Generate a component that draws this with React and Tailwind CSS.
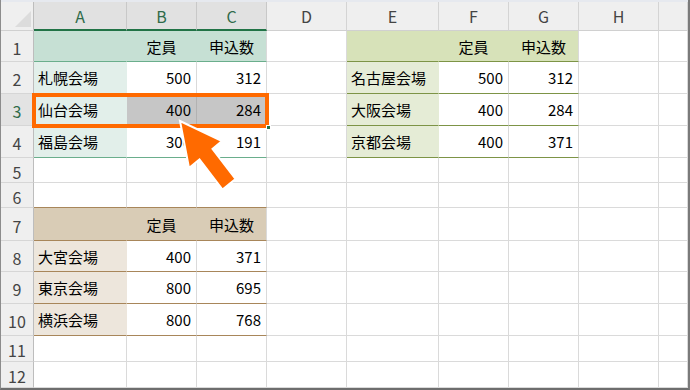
import React from "react";

const FONT = { fontFamily: '"Noto Sans CJK JP", "Noto Sans", sans-serif' };

const cols = ["A", "B", "C", "D", "E", "F", "G", "H", ""];
const rowH = [31, 32, 32, 32, 25, 25, 33, 31, 32, 32, 26, 26];

const T1H = "bg-[#c6e0d4]";
const T1A = "bg-[#e2efea]";
const T2H = "bg-[#d9ccb6]";
const T2A = "bg-[#ede6dc]";
const T3H = "bg-[#d7e2b9]";
const T3A = "bg-[#e5ecd6]";

function cellInfo(r, c) {
  let bg = "bg-white";
  let br = "border-r-[#dadada]";
  let bb = "border-b-[#dadada]";
  let text = "";
  let align = "left";

  const data = {
    "1,1": "定員", "1,2": "申込数",
    "2,0": "札幌会場", "2,1": "500", "2,2": "312",
    "3,0": "仙台会場", "3,1": "400", "3,2": "284",
    "4,0": "福島会場", "4,1": "300", "4,2": "191",
    "7,1": "定員", "7,2": "申込数",
    "8,0": "大宮会場", "8,1": "400", "8,2": "371",
    "9,0": "東京会場", "9,1": "800", "9,2": "695",
    "10,0": "横浜会場", "10,1": "800", "10,2": "768",
    "1,5": "定員", "1,6": "申込数",
    "2,4": "名古屋会場", "2,5": "500", "2,6": "312",
    "3,4": "大阪会場", "3,5": "400", "3,6": "284",
    "4,4": "京都会場", "4,5": "400", "4,6": "371",
  };
  text = data[`${r},${c}`] || "";
  if (/^\d+$/.test(text)) align = "right";
  if (text === "定員" || text === "申込数") align = "center";

  if (c <= 2 && r >= 1 && r <= 4) {
    if (r === 1) {
      bg = T1H;
      bb = "border-b-[#6aae8c]";
      if (c < 2) br = "border-r-[#c6e0d4]";
    } else {
      if (c === 0) {
        bg = T1A;
        br = "border-r-[#e2efea]";
        bb = r === 4 ? "border-b-[#6aae8c]" : "border-b-[#e2efea]";
      } else {
        bb = r === 4 ? "border-b-[#6aae8c]" : "border-b-[#dadada]";
      }
      if (r === 3 && c >= 1) {
        bg = "bg-[#c6c6c6]";
        br = c === 1 ? "border-r-[#b2b2b2]" : "border-r-[#dadada]";
        bb = "border-b-[#c6c6c6]";
      }
    }
  }
  if (c <= 2 && r === 6) bb = "border-b-[#a8865a]";
  if (c <= 2 && r >= 7 && r <= 10) {
    bb = "border-b-[#a8865a]";
    if (r === 7) {
      bg = T2H;
      if (c < 2) br = "border-r-[#d9ccb6]";
    } else if (c === 0) {
      bg = T2A;
      br = "border-r-[#ede6dc]";
    }
  }
  if (c >= 4 && c <= 6 && r >= 1 && r <= 4) {
    bb = "border-b-[#7d9446]";
    if (r === 1) {
      bg = T3H;
      if (c < 6) br = "border-r-[#d7e2b9]";
    } else if (c === 4) {
      bg = T3A;
      br = "border-r-[#e5ecd6]";
    }
  }
  return { bg, br, bb, text, align };
}

export default function App() {
  return (
    <div
      className="relative w-[690px] h-[390px] overflow-hidden bg-[#e6e9ef] pt-[2px] border-l border-l-[#8c8c8c] border-r-2 border-r-[#7a7a7a] border-b-2 border-b-[#6e6e6e] text-[15px] text-black"
      style={FONT}
    >
      <div className="grid grid-cols-[33px_93px_70px_70px_80px_92px_70px_70px_80px_1fr] bg-white">
        <div className="relative h-[29px] bg-[#efefef] border-r border-r-[#bdbdbd] border-b border-b-[#d0d0d0]">
          <svg className="absolute left-0 top-0" width="33" height="29" viewBox="0 0 33 29">
            <polygon points="14,25 30,25 30,9" fill="#dcdcdc" />
          </svg>
        </div>
        {cols.map((l, i) => (
          <div
            key={"h" + i}
            className={
              "h-[29px] flex items-center justify-center text-[16px] border-r " +
              (i <= 2
                ? "bg-[#e1e1e1] text-[#2f6b4a] border-r-[#c8c8c8] border-b-2 border-b-[#217346]"
                : "bg-[#efefef] text-[#444] border-r-[#d4d4d4] border-b border-b-[#d0d0d0]")
            }
          >
            {l}
          </div>
        ))}
        {rowH.map((h, ri) => {
          const r = ri + 1;
          return (
            <React.Fragment key={"r" + r}>
              <div
                className={
                  "flex items-center justify-center pt-[3px] text-[16px] border-r border-b border-b-[#d6d6d6] " +
                  (r === 3
                    ? "bg-[#e3e3e3] text-[#2f6b4a] border-r-[#bdbdbd]"
                    : "bg-[#efefef] text-[#444] border-r-[#bdbdbd]")
                }
                style={{ height: h }}
              >
                {r}
              </div>
              {cols.map((_, c) => {
                const info = cellInfo(r, c);
                return (
                  <div
                    key={r + "-" + c}
                    className={
                      "flex items-center pt-[2px] border-r border-b whitespace-nowrap overflow-hidden " +
                      info.bg + " " + info.br + " " + info.bb + " " +
                      (info.align === "right"
                        ? "justify-end pr-[5px]"
                        : info.align === "center"
                        ? "justify-center"
                        : "justify-start pl-[4px]")
                    }
                    style={{ height: h }}
                  >
                    {info.text}
                  </div>
                );
              })}
            </React.Fragment>
          );
        })}
      </div>

      <div className="absolute left-[31px] top-[93px] w-[237px] h-[35px] border-4 border-[#ff6a00] pointer-events-none" />
      <div className="absolute left-[265px] top-[125px] w-[5px] h-[5px] bg-[#217346] border border-white" />

      <svg className="absolute left-0 top-0 pointer-events-none" width="690" height="390" viewBox="0 0 690 390">
        <polygon
          points="179,121 221,141 211.5,149 234.5,179 221.5,189.5 198.5,159.5 188,168"
          fill="#ff6a00"
          stroke="#ffffff"
          strokeWidth="2"
          strokeLinejoin="miter"
        />
      </svg>
    </div>
  );
}
